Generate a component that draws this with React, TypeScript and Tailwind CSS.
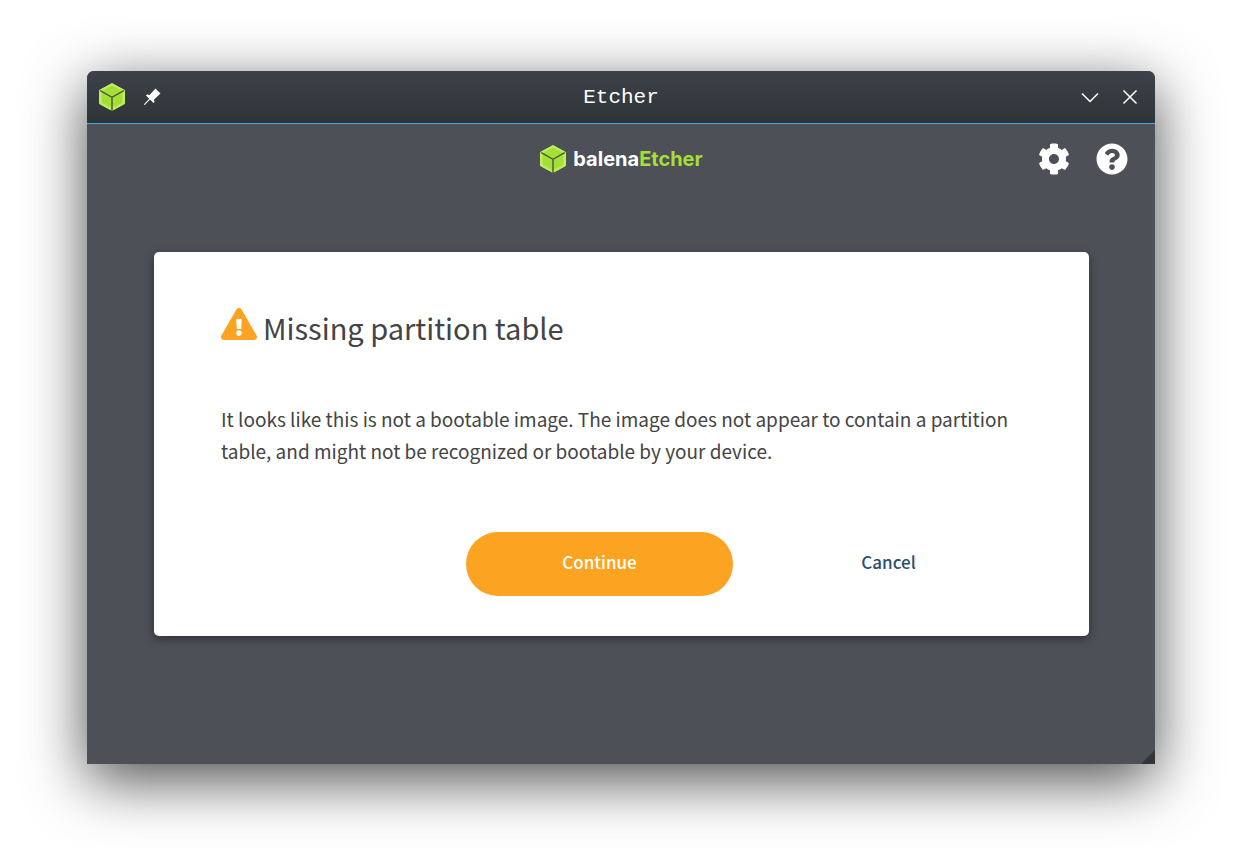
import React from "react";
import { FaCog, FaExclamationTriangle, FaQuestionCircle } from "react-icons/fa";

function CubeLogo({ className }: { className?: string }) {
  return (
    <svg viewBox="0 0 28 30" className={className} aria-hidden="true">
      <path d="M14 1.500 26.500 8.300v13.400L14 28.500 1.500 21.700V8.300Z" fill="#bdf05f" stroke="#bdf05f" strokeLinejoin="round" />
      <path d="M14 3.500 24.500 9.300v11.400L14 26.500 3.500 20.700V9.300Z" fill="#a5de37" />
      <path d="M2.200 8.600 14 15.300 25.800 8.600M14 15.300V29" fill="none" stroke="#4b5734" strokeWidth="1.400" />
    </svg>
  );
}

function TitleBar() {
  return (
    <header className="grid grid-cols-3 items-center h-[53px] px-[11px] rounded-t-[7px] border-b border-[#3daee9] bg-linear-to-b from-[#3d4249] to-[#2f3437]">
      <div className="flex items-center gap-4">
        <CubeLogo className="w-7 h-[30px]" />
        <button aria-label="Keep on all desktops" className="text-white">
          <svg viewBox="0 0 20 20" className="w-5 h-5" fill="currentColor">
            <path d="M13.500 1.500 18.500 6.500 11.800 12.800 12.600 14.800 11.500 16 8 12.600 3 17.800 2 18 2.200 17 7.200 11.800 4 8.400 5.200 7.300 7.300 8.200Z" />
          </svg>
        </button>
      </div>
      <h1 className="pt-0.5 text-center text-[21px] leading-6 text-white font-['Liberation_Mono',monospace]">Etcher</h1>
      <div className="flex items-center justify-end gap-5 pr-1">
        <button aria-label="Minimize" className="text-white">
          <svg viewBox="0 0 20 20" className="w-5 h-5" fill="none" stroke="currentColor" strokeWidth="1.500">
            <path d="m2 6.500 8 8 8-8" />
          </svg>
        </button>
        <button aria-label="Close" className="text-white">
          <svg viewBox="0 0 20 20" className="w-5 h-5" fill="none" stroke="currentColor" strokeWidth="1.500">
            <path d="m3.500 3.500 13 13m0-13-13 13" />
          </svg>
        </button>
      </div>
    </header>
  );
}

function Toolbar() {
  return (
    <div className="grid grid-cols-[1fr_auto_1fr] items-center h-[70px] px-[27px]">
      <div className="col-start-2 flex items-center gap-1.5">
        <CubeLogo className="w-7 h-[30px]" />
        <span className="text-[20px] leading-6 font-bold text-white font-[Inter,sans-serif]">
          balena<span className="text-[#a5de37]">Etcher</span>
        </span>
      </div>
      <div className="flex items-center justify-end gap-[26px] text-white">
        <button aria-label="Settings">
          <FaCog size={32} />
        </button>
        <button aria-label="Help">
          <FaQuestionCircle size={32} />
        </button>
      </div>
    </div>
  );
}

function WarningDialog() {
  return (
    <section
      role="dialog"
      aria-labelledby="warning-title"
      className="ml-[67px] mr-[66px] mt-[58px] px-[67px] pt-[54px] pb-10 rounded-[5px] bg-white shadow-[0_3px_10px_rgba(0,0,0,0.4)]"
    >
      <div className="flex items-start gap-1.5">
        <FaExclamationTriangle size={36} className="text-[#fca321]" />
        <h2 id="warning-title" className="text-[29px] leading-[42px] text-[#444]">Missing partition table</h2>
      </div>
      <p className="mt-[55px] text-[19px] leading-8 text-[#444]">
        It looks like this is not a bootable image. The image does not appear to contain a partition table, and might not
        be recognized or bootable by your device.
      </p>
      <div className="mt-[65px] flex justify-end gap-[22px]">
        <button className="w-[267px] h-16 pb-1 rounded-full bg-[#fca321] text-[17px] font-medium text-white">Continue</button>
        <button className="w-[267px] h-16 pb-1 rounded-full text-[17px] font-medium text-[#2a506f]">Cancel</button>
      </div>
    </section>
  );
}

export default function App() {
  return (
    <div className="flex min-h-screen bg-white px-[87px] pt-[71px] pb-[103px] font-['Noto_Sans_CJK_SC',sans-serif]">
      <main className="relative flex flex-1 flex-col rounded-t-[7px] bg-[#4d5057] shadow-[0_16px_60px_rgba(0,0,0,0.7)]">
        <TitleBar />
        <Toolbar />
        <WarningDialog />
        {/* resize grip */}
        <svg viewBox="0 0 14 14" className="absolute right-0 bottom-0 w-3.5 h-3.5" aria-hidden="true">
          <path d="M14 0v14H0Z" fill="#31363b" />
        </svg>
      </main>
    </div>
  );
}
